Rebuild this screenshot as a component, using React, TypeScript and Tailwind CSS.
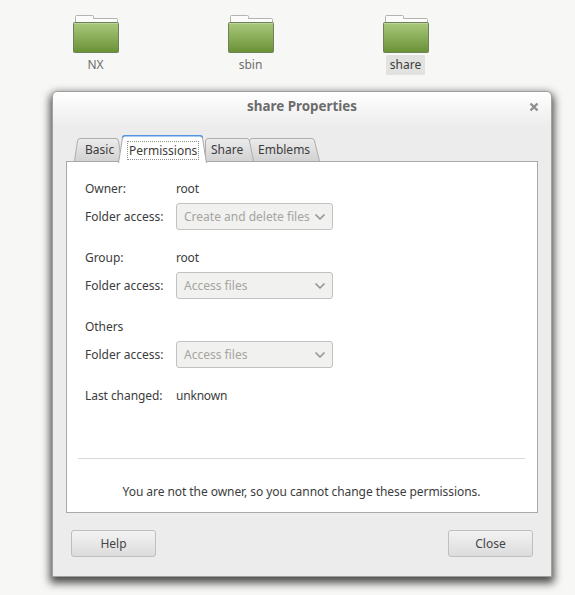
import { ChevronDown } from "lucide-react";

const folders = [
  { name: "NX", selected: false },
  { name: "sbin", selected: false },
  { name: "share", selected: true },
];

// topL/botL/topR/botR are the slanted side offsets, relative to the tab's slot
const tabs = [
  { label: "Basic", width: 47, pad: "pl-[10px]", layer: "z-[2]", topL: 3, botL: 0, topR: 45, botR: 48 },
  { label: "Permissions", width: 84, active: true, pad: "pl-[6px]", layer: "z-10", topL: 1, botL: -3, topR: 82, botR: 86 },
  { label: "Share", width: 46, pad: "pl-[5px]", layer: "z-[2]", topL: 0, botL: 0, topR: 45, botR: 49 },
  { label: "Emblems", width: 68, pad: "pl-[6px]", layer: "z-[1]", topL: -2, botL: -2, topR: 64, botR: 69 },
];

function FolderIcon() {
  return (
    <svg width="46" height="38" viewBox="0 0 46 38" className="block">
      <defs>
        <linearGradient id="folderBody" x1="0" y1="0" x2="0" y2="1">
          <stop offset="0" stopColor="#a9c97c" />
          <stop offset="1" stopColor="#6a9136" />
        </linearGradient>
      </defs>
      <path d="M2.500 8V1.500q0-1 1-1h16q1 0 1 1V3.500h23q1 0 1 1V8z" fill="#fbfbfa" stroke="#b4b4ae" />
      <rect x="0.500" y="7.500" width="45" height="30" rx="1" fill="url(#folderBody)" stroke="#71805c" />
      <path d="M1 8.500h44" stroke="#b9d495" />
    </svg>
  );
}

type TabProps = {
  label: string;
  width: number;
  active?: boolean;
  pad: string;
  layer: string;
  topL: number;
  botL: number;
  topR: number;
  botR: number;
};

function Tab({ label, width, active, pad, layer, topL, botL, topR, botR }: TabProps) {
  const h = active ? 28 : 23;
  const outline = `M${botL + 0.5} ${h}L${topL + 0.5} 3Q${topL + 1} 0.500 ${topL + 3} 0.500H${topR - 3}Q${topR - 1} 0.500 ${topR - 0.5} 3L${botR - 0.5} ${h}`;
  return (
    <div className={`relative shrink-0 ${layer} ${active ? "-mb-px h-[27px]" : "h-[23px]"}`} style={{ width }}>
      <svg width={width} height={h} className="absolute left-0 top-0 overflow-visible">
        <defs>
          <linearGradient id="tabIdle" x1="0" y1="0" x2="0" y2="1">
            <stop offset="0" stopColor="#ececec" />
            <stop offset="1" stopColor="#d2d2d2" />
          </linearGradient>
        </defs>
        <path d={`${outline}Z`} fill={active ? "#ffffff" : "url(#tabIdle)"} stroke="none" />
        <path d={outline} fill="none" stroke={active ? "#a9a9a9" : "#adadad"} />
        {active && <path d={`M${topL + 0.5} 2.500Q${topL + 1} 0.800 ${topL + 3} 0.800H${topR - 3}Q${topR - 1} 0.800 ${topR - 0.5} 2.500`} fill="none" stroke="#5294e2" strokeWidth="1.600" />}
      </svg>
      <div className={`relative ${pad} ${active ? "pt-[6px]" : "pt-[2px]"}`}>
        <span className={`inline-block h-[19px] leading-[17px] ${active ? "border border-dotted border-[#8f8f8f] px-[1px]" : "border border-transparent"}`}>
          {label}
        </span>
      </div>
    </div>
  );
}

function AccessRow({ value }: { value: string }) {
  return (
    <div className="flex items-center">
      <span className="w-[91px]">Folder access:</span>
      <div className="flex h-[27px] w-[157px] items-center justify-between rounded-[3px] border border-[#c2c2c2] bg-[#f1f1ef] pl-[7px] pr-[4px] text-[#a5a5a2]">
        <span className="whitespace-nowrap">{value}</span>
        <ChevronDown size={16} strokeWidth={2.6} className="shrink-0 text-[#969696]" />
      </div>
    </div>
  );
}

function InfoRow({ label, value }: { label: string; value: string }) {
  return (
    <div className="flex h-[17px] items-center">
      <span className="w-[91px] tracking-[-0.06px]">{label}</span>
      <span className="tracking-[-0.2px]">{value}</span>
    </div>
  );
}

function DialogButton({ label }: { label: string }) {
  return (
    <button className="h-[27px] w-[85px] rounded-[3px] border border-[#bfbfbf] bg-gradient-to-b from-[#f3f3f3] to-[#dcdcdc] text-[#454545]">
      {label}
    </button>
  );
}

export default function App() {
  return (
    <div className="h-[595px] w-[575px] overflow-hidden bg-[#f7f7f5] font-['Noto_Sans',sans-serif] text-[12px] text-[#3c3c3c]">
      <div className="flex pl-[18px] pt-[15px]">
        {folders.map((f) => (
          <div key={f.name} className="flex w-[155px] flex-col items-center">
            <FolderIcon />
            <span className={`mt-[2px] h-5 rounded-[1px] px-[4px] leading-5 ${f.selected ? "bg-[#e2e2e0] text-[#3c3c3c]" : "text-[#6e6e6e]"}`}>
              {f.name}
            </span>
          </div>
        ))}
      </div>

      <div className="ml-[52px] mt-[16px] flex h-[486px] w-[500px] flex-col rounded-t-[5px] border border-[#a0a0a0] bg-[#ececec] shadow-[0_4px_9px_2px_rgba(0,0,0,0.7)]">
        <div className="flex h-[35px] shrink-0 items-center justify-between rounded-t-[5px] bg-gradient-to-b from-white to-[#ececec] pb-[6px] pl-[194px] pr-[12px]">
          <span className="text-[13.400px] font-bold text-[#6c6c6c]">share Properties</span>
          <svg width="10" height="10" viewBox="0 0 10 10">
            <path d="M1.500 1.500l7 7M8.500 1.500l-7 7" stroke="#8e8e8e" strokeWidth="2.400" />
          </svg>
        </div>

        <div className="flex items-end pl-[21px] pt-[8px]">
          {tabs.map((t) => (
            <Tab key={t.label} {...t} />
          ))}
        </div>

        <div className="mx-[13px] flex h-[352px] flex-col border border-[#a9a9a9] bg-white pl-[18px] pr-[19px] pt-[18px]">
          <InfoRow label="Owner:" value="root" />
          <div className="mt-[6px]">
            <AccessRow value="Create and delete files" />
          </div>
          <div className="mt-[19px]">
            <InfoRow label="Group:" value="root" />
          </div>
          <div className="mt-[6px]">
            <AccessRow value="Access files" />
          </div>
          <div className="mt-[19px]">
            <InfoRow label="Others" value="" />
          </div>
          <div className="mt-[6px]">
            <AccessRow value="Access files" />
          </div>
          <div className="mt-[19px]">
            <InfoRow label="Last changed:" value="unknown" />
          </div>
          <div className="-ml-[7px] -mr-[7px] mt-[54px] border-t border-[#d9d9d9]" />
          <p className="mt-[24px] text-center tracking-[-0.06px]">You are not the owner, so you cannot change these permissions.</p>
        </div>

        <div className="flex justify-between px-[18px] pt-[17px]">
          <DialogButton label="Help" />
          <DialogButton label="Close" />
        </div>
      </div>
    </div>
  );
}
